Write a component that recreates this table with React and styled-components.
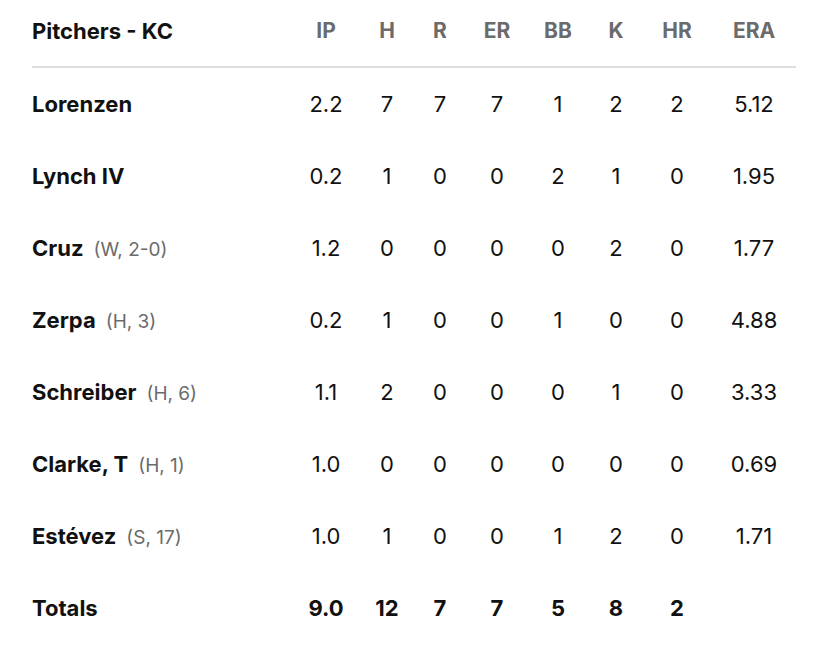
import styled, { createGlobalStyle } from 'styled-components';

const Global = createGlobalStyle`
    body {
        margin: 0;
        background: #fff;
        font-family: Inter, "Open Sans", sans-serif;
        color: #111;
    }
`;

const COLS = '258px 72px 50px 56px 58px 64px 52px 70px 84px';

const Tabla = styled.div`
    padding: 1px 32px 0 32px;
    width: 764px;
`;

const Cabecalho = styled.div`
    display: grid;
    grid-template-columns: ${COLS};
    align-items: center;
    height: 65px;
    border-bottom: 2px solid #dedede;
    font-size: 21px;
    font-weight: 700;
`;

const Titulo = styled.div`
    color: #111;
    font-size: 22px;
    padding-bottom: 6px;
`;

const ColHead = styled.div`
    color: #6b6b6b;
    text-align: center;
    padding-bottom: 6px;
`;

const Linha = styled.div`
    display: grid;
    grid-template-columns: ${COLS};
    align-items: center;
    height: 72px;
    font-size: 22px;
    font-weight: ${p => (p.$total ? 700 : 400)};
`;

const Nome = styled.div`
    font-weight: 700;
    font-size: 22px;
    display: flex;
    align-items: baseline;
    gap: 10px;
`;

const Nota = styled.span`
    font-weight: 400;
    font-size: 19px;
    color: #6b6b6b;
`;

const Celula = styled.div`
    text-align: center;
`;

const cols = ['IP', 'H', 'R', 'ER', 'BB', 'K', 'HR', 'ERA'];

const pitchers = [
    { nome: 'Lorenzen', stats: ['2.2', '7', '7', '7', '1', '2', '2', '5.12'] },
    { nome: 'Lynch IV', stats: ['0.2', '1', '0', '0', '2', '1', '0', '1.95'] },
    { nome: 'Cruz', nota: '(W, 2-0)', stats: ['1.2', '0', '0', '0', '0', '2', '0', '1.77'] },
    { nome: 'Zerpa', nota: '(H, 3)', stats: ['0.2', '1', '0', '0', '1', '0', '0', '4.88'] },
    { nome: 'Schreiber', nota: '(H, 6)', stats: ['1.1', '2', '0', '0', '0', '1', '0', '3.33'] },
    { nome: 'Clarke, T', nota: '(H, 1)', stats: ['1.0', '0', '0', '0', '0', '0', '0', '0.69'] },
    { nome: 'Estévez', nota: '(S, 17)', stats: ['1.0', '1', '0', '0', '1', '2', '0', '1.71'] },
];

const totais = ['9.0', '12', '7', '7', '5', '8', '2', ''];

function App() {
    return (
        <>
            <Global />
            <Tabla>
                <Cabecalho>
                    <Titulo>Pitchers - KC</Titulo>
                    {cols.map(c => <ColHead key={c}>{c}</ColHead>)}
                </Cabecalho>
                {pitchers.map(p => (
                    <Linha key={p.nome}>
                        <Nome>
                            {p.nome}
                            {p.nota && <Nota>{p.nota}</Nota>}
                        </Nome>
                        {p.stats.map((s, i) => <Celula key={i}>{s}</Celula>)}
                    </Linha>
                ))}
                <Linha $total>
                    <Nome>Totals</Nome>
                    {totais.map((s, i) => <Celula key={i}>{s}</Celula>)}
                </Linha>
            </Tabla>
        </>
    );
}

export default App;
